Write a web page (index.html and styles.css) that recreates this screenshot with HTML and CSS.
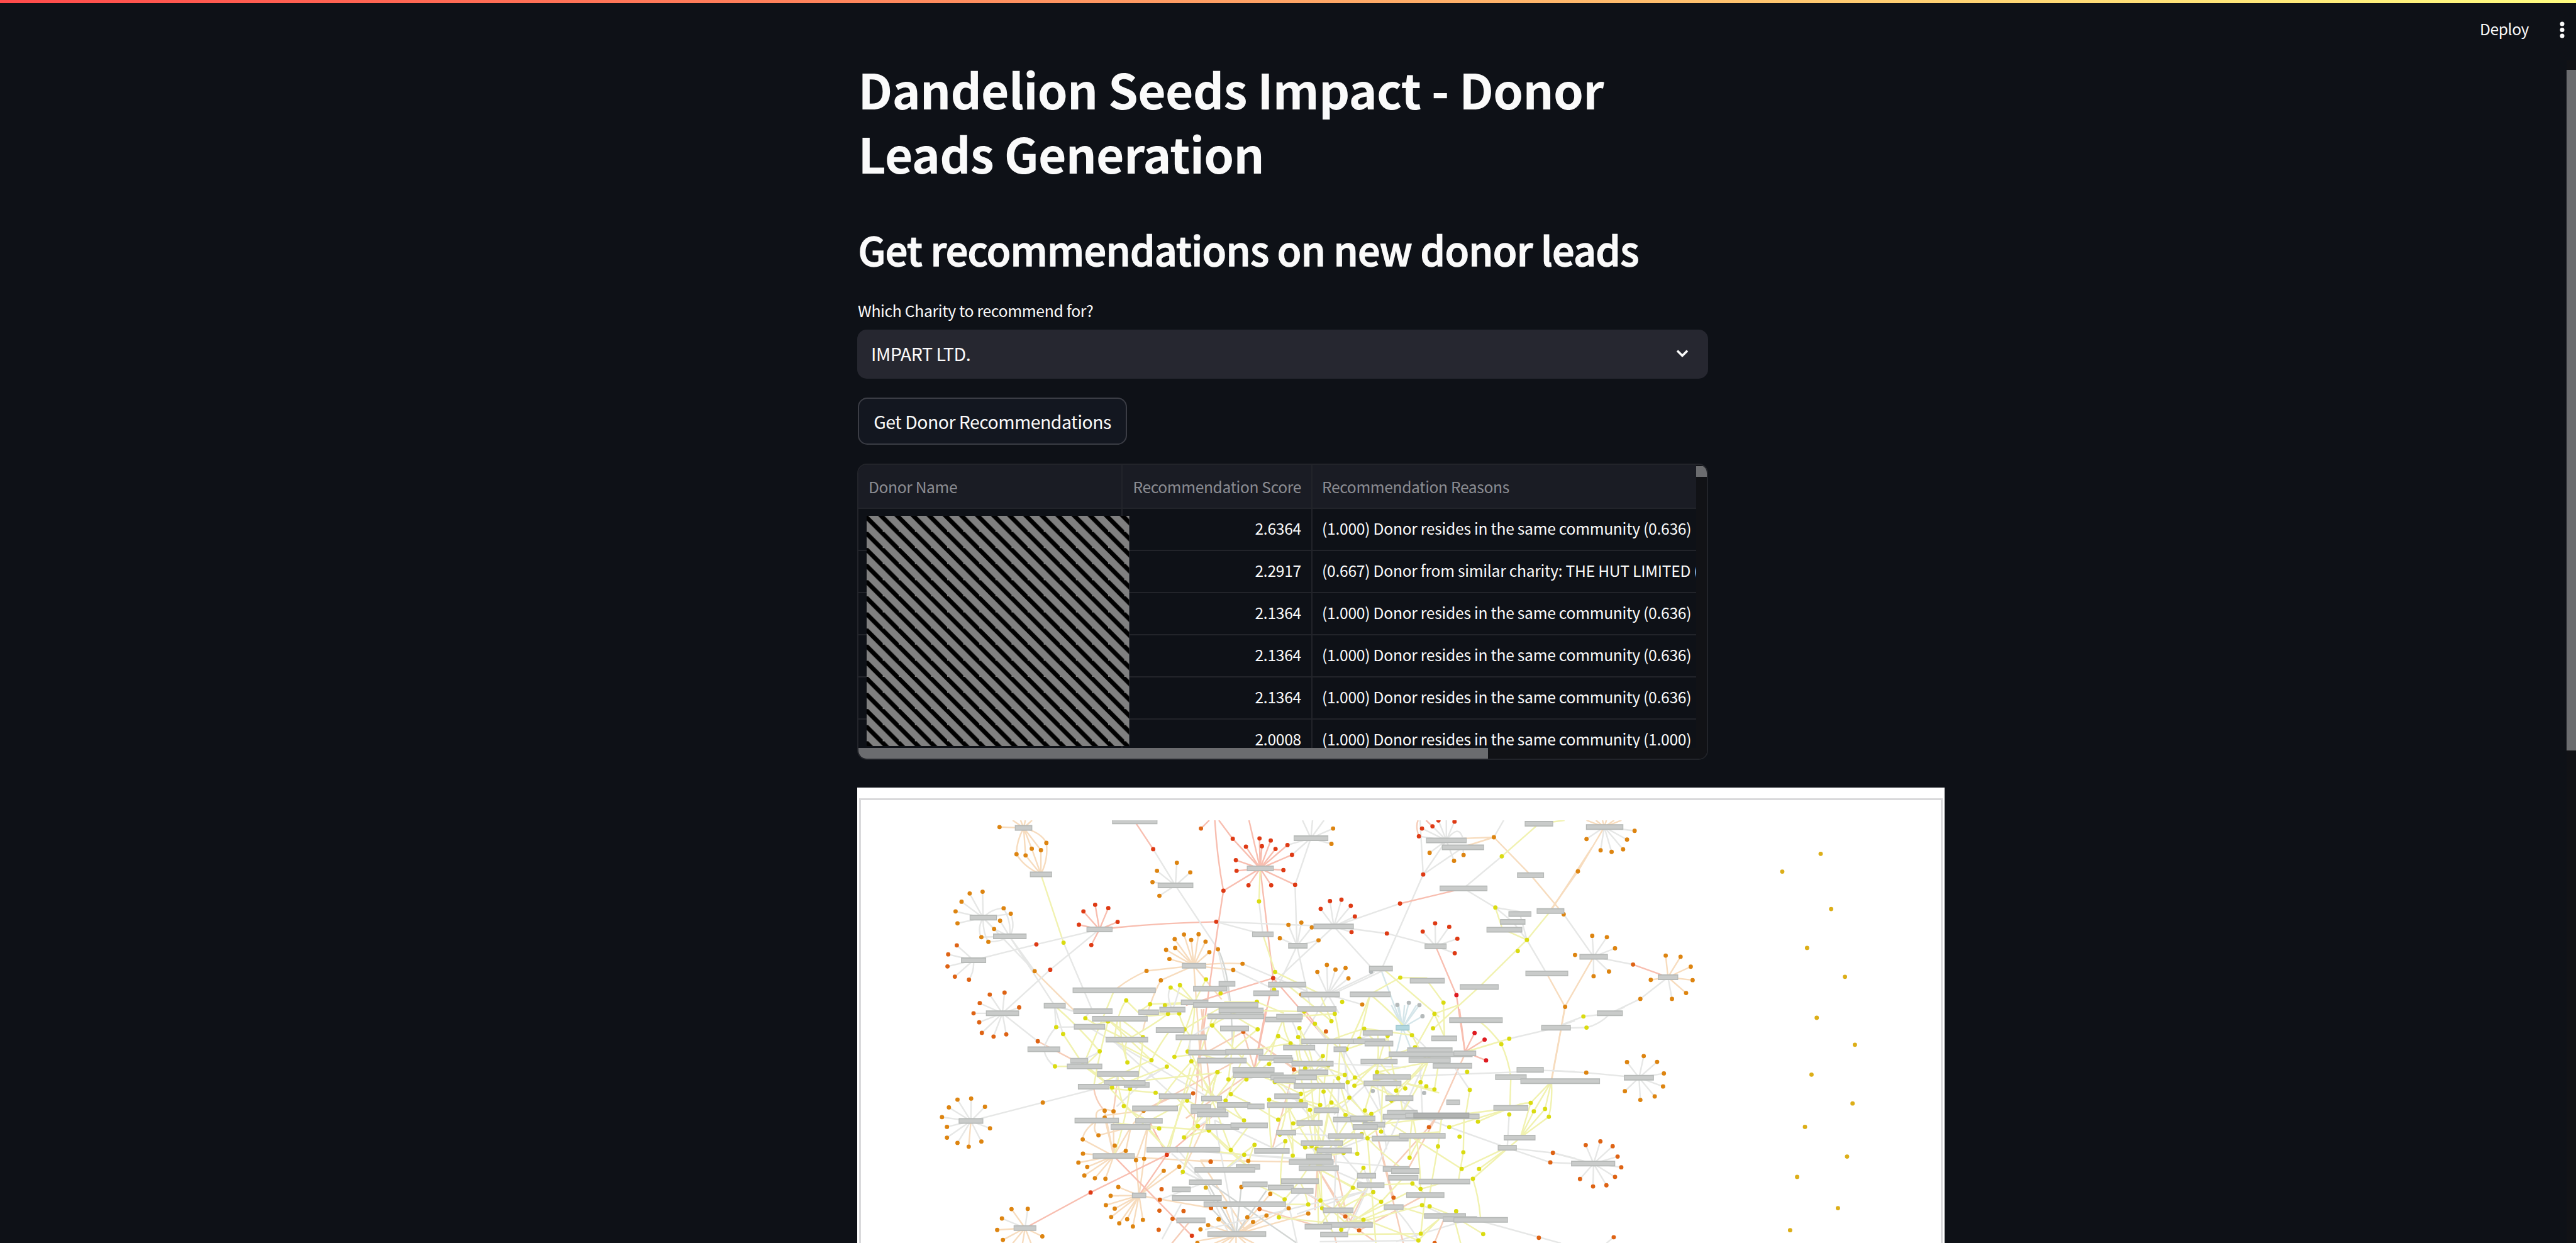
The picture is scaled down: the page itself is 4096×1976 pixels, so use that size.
FILE: index.html
```html
<!DOCTYPE html>
<html lang="en">
<head>
<meta charset="utf-8">
<title>Dandelion Seeds Impact</title>
<link rel="stylesheet" href="styles.css">
</head>
<body>
<header class="toolbar">
  <span class="deploy">Deploy</span>
  <svg class="menu" viewBox="0 0 8 28"><circle cx="4" cy="4" r="3.5"/><circle cx="4" cy="13.5" r="3.5"/><circle cx="4" cy="23" r="3.5"/></svg>
</header>
<main class="column">
  <h1>Dandelion Seeds Impact - Donor<br>Leads Generation</h1>
  <h2>Get recommendations on new donor leads</h2>
  <label class="label">Which Charity to recommend for?</label>
  <div class="select"><span>IMPART LTD.</span>
    <svg class="chevron" viewBox="0 0 20 14"><path d="M2 2.5L10 10.5L18 2.5"/></svg>
  </div>
  <button class="button">Get Donor Recommendations</button>
  <section class="table">
    <div class="grid">
      <div class="row head"><div class="name"><span>Donor Name</span></div><div class="score"><span>Recommendation Score</span></div><div class="reason"><span class="r0">Recommendation Reasons</span></div></div>
      <div class="row"><div class="name"></div><div class="score">2.6364</div><div class="reason">(1.000) Donor resides in the same community (0.636)</div></div>
      <div class="row"><div class="name"></div><div class="score">2.2917</div><div class="reason">(0.667) Donor from similar charity: THE HUT LIMITED (</div></div>
      <div class="row"><div class="name"></div><div class="score">2.1364</div><div class="reason">(1.000) Donor resides in the same community (0.636)</div></div>
      <div class="row"><div class="name"></div><div class="score">2.1364</div><div class="reason">(1.000) Donor resides in the same community (0.636)</div></div>
      <div class="row"><div class="name"></div><div class="score">2.1364</div><div class="reason">(1.000) Donor resides in the same community (0.636)</div></div>
      <div class="row"><div class="name"></div><div class="score">2.0008</div><div class="reason">(1.000) Donor resides in the same community (1.000)</div></div>
    </div>
    <svg class="redacted"><defs><pattern id="hatch" width="25.6" height="25.6" patternUnits="userSpaceOnUse"><path d="M-7.5 0H2.5L28.1 25.6H18.1ZM18.1 0H28.1L53.7 25.6H43.7Z"/></pattern></defs><rect width="100%" height="100%" fill="#808080"/><rect width="100%" height="100%" fill="url(#hatch)"/></svg>
    <div class="vtrack"><div class="vthumb"></div></div>
    <div class="htrack"><div class="hthumb"></div></div>
  </section>
  <section class="frame"><div class="canvas"></div><svg class="graph" viewBox="1464 1400.7 1857 722.3" preserveAspectRatio="none"></svg></section>
</main>
<div class="pagebar"><div class="pagethumb"></div></div>
<script src="graph.js"></script>
</body>
</html>
```
FILE: styles.css
```css
* { box-sizing: border-box; }
body { margin: 0; height: 1976px; overflow: hidden; position: relative; background: #0e1117; color: #fafafa; font-family: "Noto Sans CJK SC", "Noto Sans", sans-serif; }
.toolbar { height: 89.7px; display: flex; justify-content: flex-end; padding: 25px 18px 0 0; position: relative; font-size: 24.6px; line-height: 40px; letter-spacing: -0.4px; }
.toolbar::before { content: ""; position: absolute; left: 0; top: 0; width: 100%; height: 4.5px; background: linear-gradient(90deg, #ff4b4b, #fffd80); }
.deploy { margin-right: 49px; }
.menu { width: 8px; height: 28px; margin-top: 8.5px; fill: #fafafa; }
.column { width: 1353px; margin-left: 1363px; display: flex; flex-direction: column; align-items: flex-start; }
h1, h2 { margin: 0; white-space: nowrap; padding-left: 1.5px; }
h1 { font-size: 76.7px; line-height: 102.2px; font-weight: 700; letter-spacing: -0.76px; }
h2 { margin-top: 63.6px; font-size: 62.8px; line-height: 75px; font-weight: 500; letter-spacing: -0.72px; -webkit-text-stroke: 1.4px #fafafa; }
.label { margin-top: 40.5px; padding-left: 1px; font-size: 24.8px; line-height: 40px; white-space: nowrap; letter-spacing: -0.36px; }
.select { margin-top: 10.8px; width: 100%; height: 78px; border-radius: 15px; background: #262730; display: flex; align-items: center; justify-content: space-between; padding: 0 31px 2px 22px; font-size: 28.6px; letter-spacing: -0.45px; }
.chevron { width: 20px; height: 14px; fill: none; stroke: #fafafa; stroke-width: 3.6; }
.button { margin: 30px 0 0 1px; height: 75px; width: 428px; padding: 0; border: 2px solid #3b3d45; border-radius: 15px; background: #131720; color: #fafafa; font: 28.4px "Noto Sans CJK SC", sans-serif; letter-spacing: -0.5px; white-space: nowrap; }
.table { position: relative; margin-top: 29.6px; width: 1353px; height: 471px; border: 2px solid #22242a; border-radius: 15px; overflow: hidden; font-size: 24.6px; letter-spacing: -0.25px; }
.grid { width: 1332px; overflow: hidden; }
.row { display: grid; grid-template-columns: 420px 302px 1fr; height: 67px; border-bottom: 2px solid #22242a; line-height: 61px; white-space: nowrap; }
.row > div { overflow: hidden; border-right: 2px solid #22242a; }
.row > .reason { border-right: 0; padding-left: 15px; }
.score { text-align: right; padding-right: 16px; }
.head { height: 70px; line-height: 68px; background: #1a1c24; color: #8b8c92; letter-spacing: -0.35px; }
.head > .name { padding-left: 16px; }
.redacted { position: absolute; left: 13px; top: 81px; width: 417.6px; height: 366.6px; }
.vtrack { position: absolute; right: 0; top: 0; width: 17px; height: 100%; background: #111216; }
.vthumb { margin-top: 2px; height: 17.5px; background: #6b6c6f; }
.htrack { position: absolute; left: 0; bottom: 0; width: 100%; height: 17px; background: #111216; }
.hthumb { width: 1001px; height: 17px; background: #6b6c6f; }
.frame { position: relative; margin-top: 44.4px; width: 1728.5px; height: 724px; background: #fff; overflow: hidden; }
.canvas { position: absolute; inset: 17px 2.5px -20px 3px; border: 3px solid #d9d9db; }
.graph { position: absolute; left: 0; top: 51.8px; width: 1728.5px; height: 672.4px; fill: none; }
.graph path { vector-effect: non-scaling-stroke; }
.edge { stroke-width: 2.4; }
.dot { stroke-width: 6.8; stroke-linecap: round; }
.bar-edge { stroke: #b5b8b6; stroke-width: 9; }
.bar { stroke: #c9cbca; stroke-width: 5.5; }
.pagebar { position: absolute; right: 0; top: 96px; bottom: 0; width: 15px; padding-top: 15px; background: #111216; }
.pagethumb { height: 1082px; background: #6b6c6f; }
```
FILE: graph.js
```js
// Donor / charity network. Each tile holds its own local coordinates,
// placed by [origin x, origin y, x scale]; the y scale is always 1/3.
const DOT = { o: '#dd8410', d: '#de6314', r: '#de3a14', c: '#de1a20', y: '#dadb10', w: '#dcae18', g: '#b4b9ba' };
const LINE = { g: '#e6e7e6', y: '#f1f2b0', o: '#f7dcbe', r: '#f8beb0', b: '#d5e6ea', p: '#f6cdb8', k: '#d3d6d4' };
const tiles = [
{ at: [1450, 1330, 2.45],
  dots: {
    o: '630,247 826,328 701,386 739,392 765,358 803,365 505,587 559,578 471,629 446,679 454,740 647,663 677,691 632,727 607,769 554,811 583,835 777,985 1372,430 1289,471 1428,479 1270,529 1299,599 1402,797 1463,796 1363,821 1432,825 1492,834 1365,866 1327,876 1508,888 1341,923 1544,873 1245,984 1305,1032',
    d: '451,853 415,899 412,961 443,1013 502,1029 589,1105 651,1095 547,1149 712,1171 521,1201 1473,254',
    r: '1273,360 1030,645 981,679 1085,662 962,747 1124,733 1014,851 784,848 842,978',
    y: '898,839 1494,1027 1385,1057 1346,1069 1160,1135 1260,1154 1322,1160 1555,1099' },
  bars: '694-767-251 1101-1291-218 757-850-489 1292-1441-546 505-619-711 603-743-807 994-1103-771 469-574-929 1393-1495-957 936-1284-1083 1440-1583-1075 1389-1504-1145 815-907-1162 939-1103-1190 573-712-1201 1299-1408-1182 1211-1297-1196',
  fans: [
    'o 731,251 630,247 826,328,805,275 765,358 803,365 739,392 701,386,700,320 685,212 718,212 738,212 766,212',
    'o 803,489 826,328,835,410 765,358 803,365 739,392 701,386,735,455',
    'y 803,489 898,839', 'g 1020,1190 898,839',
    'g 561,711 505,587 559,578 471,629 446,679 454,740 647,663,600,663 677,691 607,769 554,811,535,770 583,835,560,790',
    'g 672,807 647,663,680,730 677,691,697,760 632,727 607,769 554,811 583,835,640,835 777,985 860,1160',
    'g 561,711 777,985', 'o 777,985 945,1190',
    'r 1048,771 1030,645 981,679 1085,662 962,747 1124,733 1014,851 1537,732,1280,738', 'g 1048,771 784,848 842,978',
    'g 521,929 784,848 451,853 415,899 412,961 443,1013 502,1029,525,985', 'g 642,1201 842,978 589,1105 651,1095 547,1149 712,1171',
    'r 1196,218 1273,360', 'g 1366,546 1273,360 1372,430 1289,471 1428,479 1270,529 1299,599 1544,873', 'r 1473,254 1508,212',
    'o 1443,957 1402,797 1463,796 1363,821 1432,825 1492,834 1365,866 1327,876 1508,888 1341,923 1245,984 1305,1032 1647,947,1560,940 1608,979 1480,1600 1560,1130',
    'o 1120,1075 1245,984,1170,1025', 'o 1230,1290 1305,1032,1260,1130', 'k 1605,1370 1544,873,1600,1000', 'g 1600,1179 1544,873',
    'y 1446,1145 1385,1057 1346,1069 1260,1154 1322,1160 1494,1027', 'y 1210,1196 1160,1135 1260,1154', 'y 990,1440 1110,1083', 'r 1480,1320 1567,573,1530,860',
    'g 1353,1182 1385,1057,1370,1140 1346,1069,1325,1110', 'y 1110,1350 1160,1135,1120,1200', 'g 860,1162 867,1272 896,1307 939,1190' ] },
{ at: [2050, 1330, 2.45],
  dots: {
    r: '97,573 67,732 136,307 248,305 295,316 191,347 258,345 315,359 365,339 384,389 149,416 152,471 348,467 202,545 297,545 397,543 915,294 972,243 928,254 997,213 1064,219 933,490 836,639 543,626 591,619 504,666 630,650 647,705 633,785 781,792 983,740 931,782 1042,758 1076,819 1065,893 305,1021',
    c: '1072,1108',
    o: '549,333 556,254 960,379 1102,390 1062,420 1229,299 369,748 423,736 467,761 333,816 495,827 1521,694 177,947 138,979 490,989 530,953 566,977 608,969 620,1022 423,1105 678,1156 1527,1168',
    y: '1262,397 246,628 1235,659 1367,825 1329,882 313,989 309,1080 837,1018 1018,1146 594,1143 237,1142',
    g: '873,1147 825,1158 917,1159 715,988' },
  bars: '391-536-304 195-308-459 945-1115-315 1011-1188-351 1358-1477-230 1326-1439-493 1002-1202-561 1408-1524-677 1290-1386-692 1255-1361-733 1198-1348-773 474-643-756 217-307-796 368-449-855 939-1031-857 706-806-972 877-1023-1034 1361-1540-997 1086-1249-1066 626-797-1104 284-443-1054 222-329-1098 420-584-1105 77-147-1050 -30-243-1158 77-265-1186 405-570-1179',
  fans: [
    'r 251,459 136,307 248,305 295,316 191,347 258,345 315,359 365,339 384,389 149,416 152,471 348,467 202,545 297,545 397,543 97,573 204,212 305,1021', 'r 136,307 78,212', 'r 97,573 61,212,70,400', 'y 251,459 246,628', 'g 262,796 246,628 67,732 ',
    'g 463,304 365,339 384,389 549,333 556,254 428,212 470,212 518,212 397,543', 'g 405,855 397,543 369,748 423,736 467,761 333,816 495,827 330,1050 460,1160', 'g 67,732 559,756',
    'g 559,756 543,626 591,619 504,666 630,650 647,705 633,785 781,792 836,639 310,1040 720,972', 'y 262,796 313,989', 'y 313,989 500,1100',
    'g 1030,315 915,294 972,243 928,254 997,213 1064,219 960,379 1062,420 933,490 1030,212 1098,300,1080,230', 'g 1100,351 933,490 1102,390', 'p 915,294 912,212,900,240', 'r 972,243 945,212', 'g 933,490 920,212 760,972', 'o 1229,299 1100,305 1110,345 1383,493', 'g 1229,299 1270,212',
    'y 1417,230 1262,397 1525,212', 'g 1102,561 1262,397 1235,659', 'r 1102,561 836,639', 'o 1383,493 1521,694', 'o 1466,677 1640,350', 'y 1466,677 1367,825',
    'y 1235,659 1262,760 1262,760', 'g 1235,659 1338,680 1308,733', 'y 1367,825 1273,773 1168,1066', 'g 1367,825 1338,692 1308,733 1450,997',
    'g 985,857 983,740 931,782 1042,758 1076,819 1065,893 781,792', 'r 1072,1108 985,857', 'r 1108,1398 1072,1108', 'o 1450,997 1527,1168',
    'y 765,972 1000,1220', 'b 755,972 847,1275', 'y 837,1018 710,1104 950,1020', 'y 1018,1146 950,1034 1022,1320', 'y 1168,1066 980,1275', 'b 847,1275 873,1147 825,1158 917,1159',
    'g 534,1105 490,989 530,953 566,977 608,969 620,1022 678,1156 730,990 430,1320', 'r 305,1021 -60,1160 525,1330 230,1470', 'g 177,947 450,1090', 'g 138,979 330,1090', 'y 237,1142 100,1142 350,1200', 'g 760,985 550,1105', 'g 580,1200 534,1105' ] },
{ at: [2650, 1330, 2.24],
  dots: { o: '318,266 134,308 289,311 188,366 230,374 274,361 101,474 156,804 212,811 243,868 90,902 220,987 161,1011 437,905 494,911 533,962 540,1031 380,1030 515,1097 461,1127 340,1127', d: '312,951', w: '1030,384 883,475 1070,667 978,866 1123,1014' },
  bars: '132-275-247 107-216-911 407-485-1016 174-273-1201',
  fans: [
    'g 202,247 318,266 134,308 289,311 188,366 230,374 274,361', 'o 202,247 101,474 134,212 170,212 195,212 210,212 240,212 268,212', 'o 101,474 0,665',
    'g 161,911 156,804 212,811 243,868 220,987 161,1011 312,951 47,694', 'o 161,911 51,1168', 'r 446,1016 312,951', 'o 446,1016 437,905 494,911 533,962 540,1031 380,1030 515,1097', 'g 446,1016 461,1127 340,1127', 'g 225,1201 340,1127', 'o 51,1168 0,1540,30,1330' ] },
{ at: [1450, 1723, 2.45], auto: 900,
  dots: {
    y: '989,47 1084,64 867,93 896,128 1335,25 1382,23 1404,104 1520,84 1230,144 1049,217 1165,274 1266,262 1330,295 1362,245 1417,218 1433,268 1542,323 862,294 1101,402 1176,408 1150,497 1283,429 1415,469 1298,612 1460,600 1506,622 1402,658 1397,834',
    w: '1493,915 1547,1077',
    o: '811,479 511,459 454,464 418,504 569,501 389,554 410,604 590,611 410,659 454,686 501,705 554,679 1070,521 1107,524 1233,521 1070,556 1044,647 978,668 1112,700 1158,727 979,741 1201,774 1235,767 960,787 997,809 985,853 1029,867 1073,870 1514,782 1382,808 1317,829 1127,912 1095,957 1075,1005 1112,1023 1097,1066 1131,1098 1164,1077 1188,1114 1230,1080 680,1025 748,1024 640,1073 620,1132 644,1183 809,1165 1471,1129 1503,1107 1458,1199',
    d: '545,68 556,122 605,141 658,130 790,165 1440,432 1308,923 1301,977 1299,1033 1400,1035 1296,1131 1354,1075 1515,1020', r: '1330,747 1011,940 1435,1162' },
  bars: '1017-1250-50 941-1072-91 1284-1404-108 1367-1497-145 1074-1252-157 747-884-206 926-1001-265 912-1060-294 1038-1213-333 1150-1258-389 1067-1241-379 958-1090-398 1297-1432-447 1185-1377-509 944-1130-571 1198-1313-573 1095-1262-604 459-562-574 1245-1376-721 1372-1552-721 1020-1196-753 1423-1560-888 1184-1244-955 1352-1430-924 1352-1560-968 1370-1492-1083 689-784-1122',
  fans: [
    'g 642,22 545,68 556,122 605,141 658,130 521,22 790,165', 'p 790,165 960,275', 'g 815,206 867,93,830,140 862,294,825,265', 'g 867,93 1006,91', 'y 985,294 896,128 862,294 1049,217 1101,402 1080,380',
    'g 510,574 454,464 511,459 418,504 569,501 389,554 410,604 410,659 454,686 554,679 590,611 811,479', 'o 510,574 501,705', 'g 811,479 1024,412',
    'o 1108,753 1070,556 1070,521 1112,700 1107,524 1180,604 978,668 979,741 960,787 997,809 985,853 1029,867 1073,870 1158,727 1514,782',
    'o 1214,955 1127,912 1095,957 1075,1005 1112,1023 1097,1066 1131,1098 1164,1077 1188,1114 1230,1080 1201,774 1235,767 1317,829 1382,808 1515,1020', 'o 1250,604 1201,774 1235,767', 'o 1180,604 1044,647 1158,727 1233,521', 'o 1037,571 978,668,980,620 1044,647,1015,620 1107,524,1020,490', 'p 1024,398 1070,521,1030,470', 'p 1107,524 1125,350',
    'r 1330,747 1214,955 1011,940 1520,550 1256,573', 'r 737,1122 1011,940', 'r 1435,1162 1108,753', 'o 1233,521 1070,545', 'p 1233,521 1360,447 1630,260',
    'o 737,1122 680,1025 620,1132 644,1183 809,1165 685,1200 725,1210 765,1210', 'g 737,1122 748,1024 640,1073', 'y 1330,721 1080,390 1240,590 1525,30', 'y 1080,50 1266,262 1530,450', 'y 1100,157 1266,262', 'g 1000,91 1500,450', 'g 1100,157 1360,447', 'y 1433,268 1530,450', 'y 1430,300 1340,720', 'g 1120,500 1270,330', 'g 1490,888 1397,834 1350,740 1376,721 1301,977 1600,1179', 'g 1390,1000 1310,1179', 'p 1430,1083 1345,1210', 'o 1500,560 1390,850', 'p 1485,0 1455,350 1440,620', 'p 1475,0 1515,450', 'y 1242,364 1560,325', 'y 1250,600 1506,622' ] },
{ at: [2050, 1723, 2.45], auto: 0,
  dots: {
    y: '50,84 240,104 326,139 410,144 415,98 378,176 480,76 549,62 563,25 435,13 686,101 784,138 666,152 612,206 513,241 288,282 72,323 118,361 193,361 312,374 439,303 536,288 578,355 605,338 617,375 647,351 645,393 516,423 624,454 421,435 422,471 288,464 128,436 106,469 502,492 549,479 459,517 689,520 716,538 608,543 183,571 326,567 389,586 36,622 333,643 356,677 227,696 128,722 184,747 387,751 439,709 466,702 487,715 600,737 657,742 700,662 676,641 757,628 740,323 820,418 858,407 800,469 922,375 946,396 980,412 1117,322 1128,415 980,25 974,99 886,134 899,196 1260,180 1293,152 1383,481 1396,524 1443,512 1459,552 1293,540 1162,577 1042,605 1085,654 995,704 1101,734 1094,819 1167,819 1141,870 876,762 683,814 888,894 922,922 724,938 639,916 757,988 928,1005 960,1011 1071,1036 683,1079 923,1151 1184,1153 913,1186 590,1130 510,1021 503,981 452,1001 353,975 329,1067',
    d: '180,117 526,115 392,310 43,782 957,605 809,966 607,1063 665,1134 248,1025 45,1020 1476,737 1465,786 1417,1172 981,1199',
    o: '201,778 172,912 293,947 277,1058 197,1067 221,1091 77,1077 104,1014 452,1048 370,1021', c: '1148,123 1190,157 1196,263', g: '930,37 722,420 937,430' },
  bars: '30-267-38 272-424-54 318-429-39 83-204-100 347-481-197 423-647-166 640-774-165 688-808-177 680-806-122 558-612-206 -50-120-223 105-264-220 -12-194-264 244-385-250 307-389-263 382-558-280 671-826-269 135-311-312 137-349-339 294-488-350 307-400-365 411-536-325 391-606-394 722-881-348 684-842-381 775-892-457 310-416-447 280-450-492 70-210-491 197-269-499 4-91-458 -40-45-502 -40-107-523 -14-118-541 476-580-519 556-700-566 628-733-561 680-774-593 638-743-604 403-512-584 22-163-604 127-283-596 318-401-633 535-683-651 718-872-664 832-1027-650 421-597-687 487-635-725 226-374-727 443-551-756 371-558-784 412-580-815 149-251-809 -24-230-824 656-736-854 656-771-902 764-876-819 799-917-830 787-913-864 914-1130-884 862-1022-953 338-496-882 176-282-898 283-391-914 380-474-932 14-359-1000 514-641-1031 768-851-1015 937-1112-1060 1015-1159-1076 1060-1288-1080 515-722-1106 437-552-1115 502-619-1155 30-276-1153 866-1056-211 789-1140-232 1060-1155-227 872-1048-262 973-1138-291 967-1075-151 1042-1266-57 1427-1551-96 1324-1438-312 1234-1366-349 1340-1673-370 1227-1373-507 1270-1403-659 1245-1325-711 1030-1087-478 782-910-532 764-1015-552 1000-1169-550 858-1126-545',
  blue: '818-876-96', dark: '892-1126-545',
  fans: [
    'r 1108,220 1148,123 1190,157 1196,263 1085,0', 'y 1110,220 1293,152', 'y 1260,180 1170,65,1210,100', 'y 1260,180 1300,349,1290,260', 'y 1300,349 1296,507', 'g 1293,152 1489,96', 'g 1293,540 1285,711', 'g 1480,96 1568,60',
    'o 1470,370 1527,-10', 'y 1470,370 1383,481 1396,524 1443,512 1459,552,1475,470', 'y 1340,659 1383,481 1396,524 1443,512 1459,552', 'y 1300,507 1383,481,1340,480', 'y 1300,700 1340,659 1094,819 1167,819 1141,870', 'g 1285,711 1476,737 1465,786 940,560', 'g 1476,737 1570,765', 'g 1465,786 1640,795',
    'g 1380,320 740,350', 'g 1380,312 1568,320', 'y 1141,870 1173,1070,1165,960', 'g 1170,1085 1510,1200', 'g 1120,1080 820,1190', 'y 1060,1060 960,1011 1071,1036 1184,1153 1090,1200', 'y 960,1060 840,1015', 'y 1000,1076 913,1186 923,1151',
    'p 1108,230 990,550', 'p 990,550 957,605 870,819', 'p 957,605 800,819', 'y 1290,510 1162,577 1042,605 690,600', 'y 1094,819 800,590', 'y 1101,734 1080,884 1104,560', 'y 995,704 1010,560 960,950', 'y 1128,415 1110,550', 'g 1128,415 1060,291',
    'b 847,96 800,-20 830,-20 855,-20 905,-20 930,37 820,230 890,230', 'y 980,25 900,200 1080,-20 1025,151', 'y 886,134 920,211 690,100', 'p 180,117 0,240 400,310 225,300 440,350', 'r 225,312 275,0', 'r 440,10 526,150', 'p 230,312 -60,560',
    'p 392,310 300,727', 'o 0,775 440,784 200,1153', 'y 140,340 0,560', 'y 50,458 -40,220', 'g 330,365 680,870', 'g 460,180 700,560', 'g 600,206 620,454 780,590', 'g 700,380 560,540', 'g 740,381 930,550 780,720', 'g 920,290 930,540', 'g 0,730 470,770 840,810', 'g 60,570 150,1153 330,727', 'g 490,790 700,902',
    'y 490,815 400,197 460,280 500,394 540,519 620,566 660,604 560,360 760,988 639,916 495,1115 503,981', 'p 490,815 607,1063 640,1106 480,1031', 'y 600,1106 683,1079 700,902 870,940', 'p 620,1106 690,930 560,750 665,1134', 'p 735,620 809,966 850,1200', 'p 665,1134 730,1190 930,960', 'p 248,1025 500,1115', 'p 410,920 607,1063',
    'o 150,1155 77,1077 104,1014 33,1107 197,1067 221,1091 277,1058 293,947 452,1048 370,1021 60,1200 90,1200 120,1200 150,1200 190,1200 225,1200 -20,1190', 'k 150,1153 30,890 172,912 45,1020 277,930', 'k 50,900 405,1200', 'g 370,1000 405,1200', 'g 700,930 405,1050 20,1130', 'g 930,300 610,1160', 'g 560,280 860,300', 'g 580,394 560,1031', 'y 860,381 1000,430 980,412', 'y 690,660 820,550 1000,630', 'y 700,662 735,1200', 'y 1000,262 980,412 740,323', 'p 560,1155 570,1200 540,1160', 'g 700,660 490,760 330,633', 'p 1020,1076 980,1200', 'g 913,1186 500,1192' ] },
{ at: [2650, 1723, 2.24],
  dots: { w: '1015,45 1161,183 995,336 1152,484 970,604 1131,756 940,860 1096,1020 913,1133', o: '353,241 289,272 404,271 430,330 427,397 281,421 395,448 340,466 133,326', d: '187,678 131,697 234,703 253,756 267,811 109,871 243,860 210,903 159,909 238,1169', y: '122,38 134,95' },
  bars: '277-392-352 75-244-792',
  fans: [ 'g 335,352 353,241 289,272 404,271 430,330 427,397 281,421 395,448 340,466 133,326', 'g 133,326 0,316', 'g 161,792 187,678 131,697 234,703 253,756 267,811 109,871 243,860 210,903 159,909 6,737', 'g 223,24 122,38 134,95,190,75 280,-10', 'g 40,80 122,38', 'g 30,98 134,95', 'g 238,1169 210,1200' ] }
];
const svg = document.querySelector('.graph');
const layers = [0, 1, 2].map(() => svg.appendChild(document.createElementNS('http://www.w3.org/2000/svg', 'g')));
function draw(layer, cls, d, stroke) {
  const p = document.createElementNS('http://www.w3.org/2000/svg', 'path');
  p.setAttribute('class', cls);
  p.setAttribute('d', d);
  if (stroke) p.style.stroke = stroke;
  layers[layer].appendChild(p);
}
const centres = [];
for (const t of tiles) {
  t.pt = (x, y) => (t.at[0] + x / t.at[2]).toFixed(1) + ' ' + (t.at[1] + y / 3).toFixed(1);
  for (const b of t.bars.match(/-?\d+-\d+-\d+/g)) {
    const [, a, c, y] = b.match(/(-?\d+)-(\d+)-(\d+)/).map(Number);
    centres.push([t.at[0] + (a + c) / 2 / t.at[2], t.at[1] + y / 3]);
  }
}
for (const t of tiles) {
  for (const f of t.fans) {
    const [col, hub, ...ends] = f.trim().split(' ');
    const h = hub.split(',').map(Number);
    let d = '';
    for (const e of ends) {
      const n = e.split(',').map(Number);
      d += 'M' + t.pt(h[0], h[1]) + (n.length > 2 ? 'Q' + t.pt(n[2], n[3]) + ' ' : 'L') + t.pt(n[0], n[1]);
    }
    draw(0, 'edge', d, LINE[col]);
  }
  // Donors in the crowded middle join two charities around them.
  if (t.auto !== undefined) t.dots.y.split(' ').forEach((s, i) => {
    const [lx, ly] = s.split(',').map(Number);
    if (lx < t.auto || lx > (t.auto ? 1600 : 930)) return;
    const x = t.at[0] + lx / t.at[2], y = t.at[1] + ly / 3;
    const near = centres.map(c => [Math.hypot(c[0] - x, c[1] - y), c]).sort((a, b) => a[0] - b[0]);
    [[1 + i % 3, i % 3 ? 'y' : 'g'], [6 + i * 7 % 14, 'y']].forEach(([k, c]) => {
      const q = near[k][1];
      draw(0, 'edge', `M${x} ${y}Q${(x + q[0]) / 2 + (i % 5 - 2) * 3} ${(y + q[1]) / 2} ${q[0]} ${q[1]}`, LINE[c]);
    });
  });
  for (const k in t.dots) draw(1, 'dot', t.dots[k].split(' ').map(s => 'M' + t.pt(...s.split(',').map(Number)) + 'h.1').join(''), DOT[k]);
  const bars = (list, edge, fill) => {
    for (const b of list.match(/-?\d+-\d+-\d+/g)) {
      const [, a, c, y] = b.match(/(-?\d+)-(\d+)-(\d+)/).map(Number);
      draw(2, 'bar-edge', 'M' + t.pt(a, y) + 'L' + t.pt(c, y), edge);
      draw(2, 'bar', 'M' + t.pt(a + 3, y) + 'L' + t.pt(c - 3, y), fill);
    }
  };
  bars(t.bars);
  if (t.blue) { bars(t.blue, '#9cc6cf', '#b3d8e0'); bars(t.dark, '#a5a8a6', '#b0b2b1'); }
}
```
